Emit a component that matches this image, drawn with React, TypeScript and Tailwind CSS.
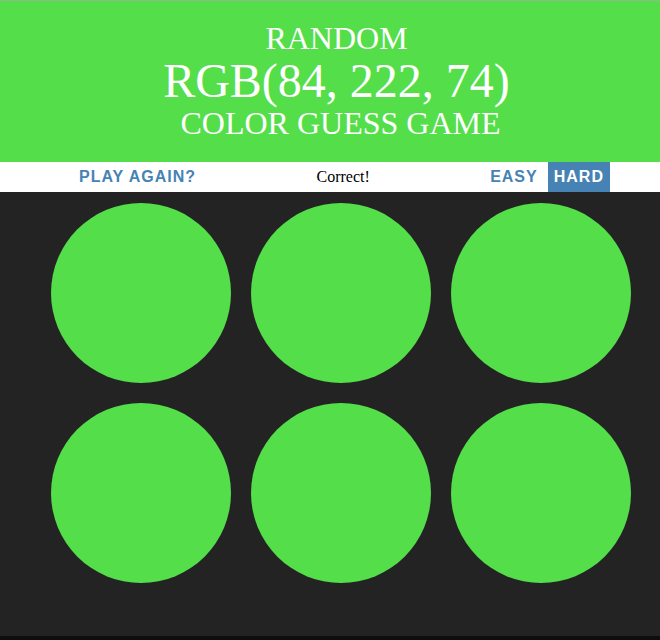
import React from "react";

const color = "rgb(84, 222, 74)";

export default function App() {
  const circles = [0, 1, 2, 3, 4, 5];
  return (
    <div className="w-[660px] h-[640px] overflow-hidden flex flex-col bg-[#232323]">
      <div
        className="h-[162px] shrink-0 border-t border-[#93b88d] pt-[19px] pl-[13px] text-white text-center font-normal"
        style={{ backgroundColor: color, fontFamily: '"Liberation Serif", "Times New Roman", serif' }}
      >
        <div className="text-[32px] leading-[37px]">RANDOM</div>
        <div className="text-[48px] leading-[48px]">RGB(84, 222, 74)</div>
        <div className="text-[32px] leading-[37px] pl-[8px]">COLOR GUESS GAME</div>
      </div>
      <div className="h-[30px] shrink-0 bg-white pl-[23px] flex justify-center items-stretch gap-[4px]">
        <button
          className="px-[6px] uppercase font-bold tracking-[1px] text-[16px] text-[#4682b4]"
          style={{ fontFamily: '"Liberation Sans", Arial, sans-serif' }}
        >
          Play Again?
        </button>
        <span
          className="w-[274px] flex items-center justify-center text-[16px] text-black"
          style={{ fontFamily: '"Liberation Serif", "Times New Roman", serif' }}
        >
          Correct!
        </span>
        <button
          className="px-[6px] uppercase font-bold tracking-[1px] text-[16px] text-[#4682b4]"
          style={{ fontFamily: '"Liberation Sans", Arial, sans-serif' }}
        >
          Easy
        </button>
        <button
          className="px-[6px] uppercase font-bold tracking-[1px] text-[16px] text-white bg-[#4682b4]"
          style={{ fontFamily: '"Liberation Sans", Arial, sans-serif' }}
        >
          Hard
        </button>
      </div>
      <div className="flex-1 pl-[22px] pt-px">
        <div className="w-[600px] mx-auto grid grid-cols-3">
          {circles.map((i) => (
            <div key={i} className="m-[10px] w-[180px] h-[180px] rounded-full" style={{ backgroundColor: color }} />
          ))}
        </div>
      </div>
      <div className="h-[4px] shrink-0 bg-[#0e0e0e]" />
    </div>
  );
}
